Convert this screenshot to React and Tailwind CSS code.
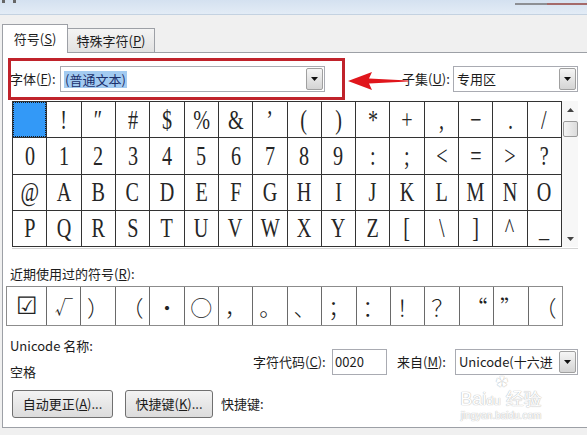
import React from "react";

const rows = [
  ["", "!", "″", "#", "$", "%", "&", "’", "(", ")", "*", "+", ",", "−", ".", "/"],
  "0123456789:;<=>?".split(""),
  "@ABCDEFGHIJKLMNO".split(""),
  ["P", "Q", "R", "S", "T", "U", "V", "W", "X", "Y", "Z", "[", "\\", "]", "^", "_"],
];

const recent = ["☑", "√", "）", "（", "·", "○", "，", "。", "、", "；", "：", "！", "？", "“", "”", "（"];

function DDBtn() {
  return (
    <div className="w-[17px] h-full bg-gradient-to-b from-[#f6f6f6] to-[#d4d4d4] border border-[#a0a0a0] rounded-[2px] flex items-center justify-center">
      <svg width="7" height="4" viewBox="0 0 7 4">
        <path d="M0 0h7L3.5 4z" fill="#111" />
      </svg>
    </div>
  );
}

function Select({ w, children }) {
  return (
    <div className={`${w} h-[26px] flex items-center border border-[#a9abb2] bg-white p-[1px]`}>
      <div className="flex-1 min-w-0 overflow-hidden whitespace-nowrap pl-[2px] flex items-center">{children}</div>
      <DDBtn />
    </div>
  );
}

export default function App() {
  return (
    <div className="relative w-[587px] h-[435px] overflow-hidden bg-[#f0f0f0] text-[13px] text-[#1c1c1c] font-['Noto_Sans_CJK_SC','Noto_Sans',sans-serif]">
      {/* title bar */}
      <div className="relative h-[15px] bg-gradient-to-b from-[#d4e1f0] to-[#e3ecf6] border-b border-[#c4d2e1]">
        <div className="absolute left-[2px] top-0 w-[3px] h-[3px] bg-[#666]" />
        <div className="absolute left-[13px] top-0 w-[3px] h-[3px] bg-[#666]" />
        <div className="absolute left-[515px] top-[3px] w-[32px] h-[2px] bg-[#8d8f94]" />
        <div className="absolute left-[547px] top-[3px] w-[40px] h-[2px] bg-[#a46a6a]" />
      </div>

      {/* tabs */}
      <div className="mt-[9px] h-[28px] pl-[2px] flex items-end">
        <div className="relative z-10 -mb-px w-[66px] h-[29px] bg-white border border-b-0 border-[#9da0a6] flex items-center justify-center">
          符号(<u>S</u>)
        </div>
        <div className="w-[87px] h-[24px] bg-gradient-to-b from-[#f4f4f4] to-[#e2e2e2] border border-l-0 border-b-0 border-[#9da0a6] flex items-center justify-center">
          特殊字符(<u>P</u>)
        </div>
      </div>

      {/* panel */}
      <div className="ml-[2px] w-[620px] h-[376px] bg-white border border-[#9da0a6] flex flex-col">
        {/* font row */}
        <div className="mt-[13px] h-[26px] pl-[7px] flex items-center">
          <div className="w-[50px] whitespace-nowrap">字体(<u>F</u>):</div>
          <Select w="w-[265px]">
            <span className="bg-[#a3cbf1] text-[#1b2f6b] px-[1px] leading-[17px]">(普通文本)</span>
          </Select>
          <div className="w-[77px]" />
          <div className="w-[51px] whitespace-nowrap">子集(<u>U</u>):</div>
          <Select w="w-[125px]">
            <span>专用区</span>
          </Select>
        </div>

        {/* symbol grid */}
        <div className="mt-[9px] ml-[9px] w-[566px] pb-[1px] border-b border-[#d3d3d3] flex">
          <div className="w-[550px] grid grid-cols-[repeat(16,minmax(0,1fr))] border-l border-t border-[#333] font-['Liberation_Serif',serif] text-[28px] text-[#262626]">
            {rows.map((r, ri) =>
              r.map((c, ci) => (
                <div
                  key={ri + "-" + ci}
                  className="h-[36.25px] border-r border-b border-[#333] flex items-center justify-center overflow-hidden"
                >
                  {ri === 0 && ci === 0 ? (
                    <div className="w-full h-full bg-[#3399f7] border border-dotted border-[#1a1a1a]" />
                  ) : (
                    <span className="inline-block leading-[36px] scale-x-[0.72]">{c}</span>
                  )}
                </div>
              ))
            )}
          </div>
          <div className="w-[16px] h-[146px] bg-[#f7f7f7] flex flex-col items-center">
            <svg className="mt-[7px]" width="7" height="4" viewBox="0 0 7 4">
              <path d="M0 4L3.5 0L7 4z" fill="#444" />
            </svg>
            <div className="mt-[9px] w-[15px] h-[16px] rounded-[2px] border border-[#9a9a9a] bg-gradient-to-r from-[#f3f3f3] to-[#dcdcdc]" />
            <div className="flex-1" />
            <svg className="mb-[6px]" width="7" height="4" viewBox="0 0 7 4">
              <path d="M0 0h7L3.5 4z" fill="#444" />
            </svg>
          </div>
        </div>

        {/* recent */}
        <div className="mt-[17px] pl-[7px] h-[16px] leading-[16px]">近期使用过的符号(<u>R</u>):</div>
        <div className="mt-[4px] ml-[3px] w-[557px] h-[40px] flex border border-[#8c8c8c] font-['Noto_Sans_CJK_SC',sans-serif] font-light text-[22px] text-[#222]">
          {recent.map((c, i) => (
            <div
              key={i}
              className={`${i === 0 ? "w-[40px]" : "flex-1"} h-full flex items-center justify-center leading-none ${i < 15 ? "border-r border-[#6a6a6a]" : ""}`}
            >
              <span className={i === 0 ? "text-[24px] font-['DejaVu_Sans',sans-serif]" : i === 1 ? "text-[18px]" : ""}>{c}</span>
            </div>
          ))}
        </div>

        {/* info */}
        <div className="mt-[12px] h-[42px] flex">
          <div className="w-[250px] pl-[7px] flex flex-col">
            <div className="h-[16px] leading-[16px]">Unicode 名称:</div>
            <div className="mt-[10px] h-[16px] leading-[16px]">空格</div>
          </div>
          <div className="mt-[10px] h-[27px] flex items-center">
            <div className="w-[79px] whitespace-nowrap">字符代码(<u>C</u>):</div>
            <div className="w-[55px] h-[26px] border border-[#a9abb2] bg-white flex items-center pl-[2px]">0020</div>
            <div className="w-[10px]" />
            <div className="w-[58px] whitespace-nowrap">来自(<u>M</u>):</div>
            <Select w="w-[123px]">
              <span>Unicode(十六进</span>
            </Select>
          </div>
        </div>

        {/* buttons */}
        <div className="mt-[10px] pl-[9px] h-[28px] flex items-center">
          <div className="w-[101px] h-[28px] rounded-[3px] border border-[#707070] bg-gradient-to-b from-[#f3f3f3] to-[#dcdcdc] flex items-center justify-center">
            自动更正(<u>A</u>)...
          </div>
          <div className="ml-[12px] w-[88px] h-[28px] rounded-[3px] border border-[#707070] bg-gradient-to-b from-[#f3f3f3] to-[#dcdcdc] flex items-center justify-center">
            快捷键(<u>K</u>)...
          </div>
          <div className="ml-[8px]">快捷键:</div>
        </div>
      </div>

      {/* annotation: red box + arrow */}
      <div className="absolute left-[8px] top-[58px] w-[337px] h-[42px] border-[3px] border-[#c0232b]" />
      <svg className="absolute left-[346px] top-[71px]" width="64" height="20" viewBox="0 0 64 20">
        <path d="M2 10 L26 1 L23 7.5 L62 9.5 L62 10.5 L23 12.5 L26 19 Z" fill="#e0161c" />
      </svg>

      {/* watermark */}
      <div className="absolute left-[448px] top-[376px] w-[106px] flex flex-col items-center text-white [text-shadow:0_0_1px_#b9b9b9,0_0_1px_#b9b9b9] pointer-events-none">
        <div className="text-[12px] leading-[12px] ml-[2px] mb-[2px]">✿</div>
        <div className="text-[18px] leading-[19px] font-['Liberation_Sans',sans-serif] whitespace-nowrap">Bai<span className="text-[13px]">du</span> 经验</div>
        <div className="text-[10px] leading-[12px] font-['Liberation_Sans',sans-serif]">jingyan.baidu.com</div>
      </div>
    </div>
  );
}
